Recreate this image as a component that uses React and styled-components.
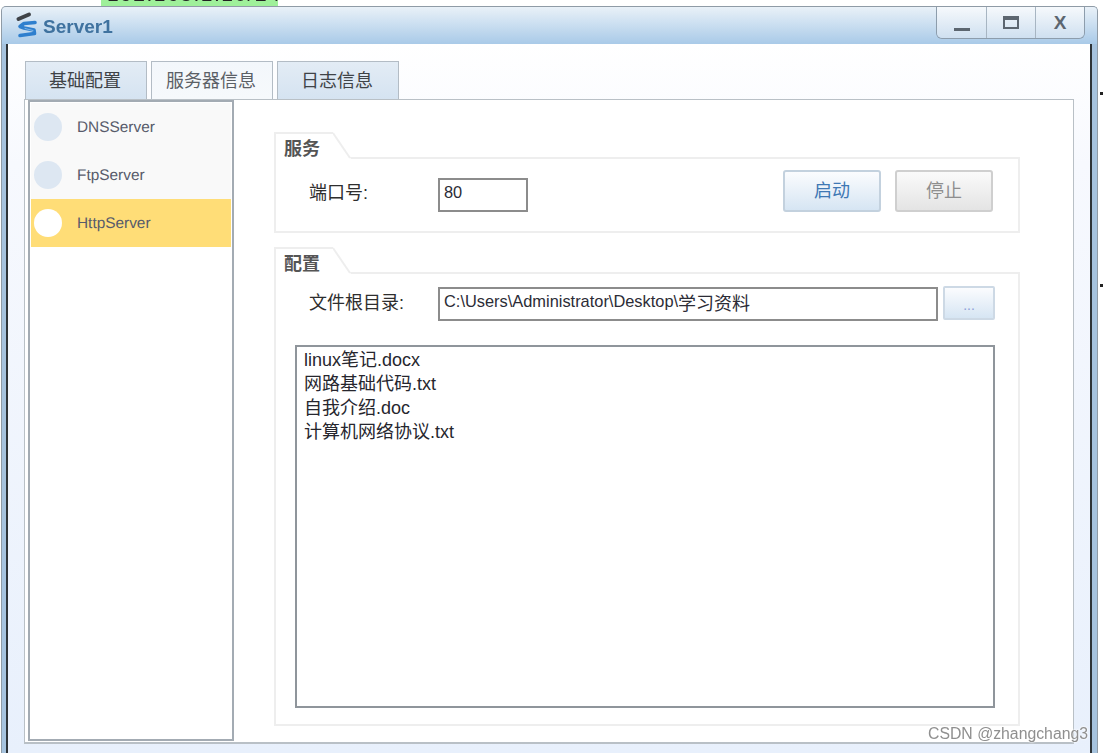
import React from "react";
import styled, { createGlobalStyle } from "styled-components";

const FONT = '"Liberation Sans", "Noto Sans CJK SC", sans-serif';

const GlobalStyle = createGlobalStyle`
  html, body {
    margin: 0;
    padding: 0;
    background: #ffffff;
  }
  * {
    box-sizing: border-box;
  }
`;

const services = [
  { name: "DNSServer" },
  { name: "FtpServer" },
  { name: "HttpServer", active: true },
];

const files = [
  "linux笔记.docx",
  "网路基础代码.txt",
  "自我介绍.doc",
  "计算机网络协议.txt",
];

const ServerIcon = () => (
  <IconSvg width="24" height="28" viewBox="0 0 24 28" fill="none" strokeLinecap="round" strokeLinejoin="round">
    <path d="M4.5 8 L15 3.5" stroke="#3f4348" strokeWidth="4" />
    <path d="M21 11.5 L10 12.5 L6 15.5 L10 17 L20 19 L20.5 22.5 L6 24.5" stroke="#2e7fce" strokeWidth="3.6" />
    <path d="M11 17.5 L19 19.5" stroke="#7db4e6" strokeWidth="1" />
  </IconSvg>
);

const App = () => {
  return (
    <Page>
      <GlobalStyle />
      <TopStrip>
        <IpLabel>192.168.1.10/24</IpLabel>
      </TopStrip>
      <Window>
        <TitleBar>
          <ServerIcon />
          <Title>Server1</Title>
          <Controls>
            <ControlButton>
              <MinIcon />
            </ControlButton>
            <ControlButton>
              <MaxIcon />
            </ControlButton>
            <ControlButton>X</ControlButton>
          </Controls>
        </TitleBar>
        <WindowBody>
          <Tabs>
            <Tab>基础配置</Tab>
            <Tab $selected>服务器信息</Tab>
            <Tab>日志信息</Tab>
          </Tabs>
          <Panel>
            <Sidebar>
              {services.map((item) => (
                <ServiceItem key={item.name} $active={item.active}>
                  <ServiceDot $active={item.active} />
                  <ServiceName>{item.name}</ServiceName>
                </ServiceItem>
              ))}
            </Sidebar>
            <Content>
              <Section>
                <SectionHead>
                  <SectionTab>服务</SectionTab>
                  <TabSlant width="18" height="27" viewBox="0 0 18 27">
                    <path d="M0 0 L0 27 L18 27 Z" fill="#ffffff" />
                    <path d="M0 1 L17 26" stroke="#eeeeee" strokeWidth="2" fill="none" />
                  </TabSlant>
                </SectionHead>
                <ServiceBox>
                  <FieldLabel>端口号:</FieldLabel>
                  <PortInput>80</PortInput>
                  <ButtonGroup>
                    <ActionButton>启动</ActionButton>
                    <ActionButton $disabled>停止</ActionButton>
                  </ButtonGroup>
                </ServiceBox>
              </Section>
              <Section $grow>
                <SectionHead>
                  <SectionTab>配置</SectionTab>
                  <TabSlant width="18" height="27" viewBox="0 0 18 27">
                    <path d="M0 0 L0 27 L18 27 Z" fill="#ffffff" />
                    <path d="M0 1 L17 26" stroke="#eeeeee" strokeWidth="2" fill="none" />
                  </TabSlant>
                </SectionHead>
                <ConfigBox>
                  <PathRow>
                    <PathLabel>文件根目录:</PathLabel>
                    <PathInput>
                      C:\Users\Administrator\Desktop\<CjkText>学习资料</CjkText>
                    </PathInput>
                    <BrowseButton>...</BrowseButton>
                  </PathRow>
                  <FileList>
                    {files.map((file) => (
                      <FileRow key={file}>{file}</FileRow>
                    ))}
                  </FileList>
                </ConfigBox>
              </Section>
            </Content>
          </Panel>
        </WindowBody>
      </Window>
      <EdgeTick $top={92} />
      <EdgeTick $top={284} />
      <Watermark>CSDN @zhangchang3</Watermark>
    </Page>
  );
};

const Page = styled.div`
  position: relative;
  width: 1103px;
  height: 753px;
  overflow: hidden;
  background: #ffffff;
  font-family: ${FONT};
`;

const TopStrip = styled.div`
  height: 6px;
  width: 177px;
  margin-left: 101px;
  background: #9ff09a;
  overflow: hidden;
  filter: blur(0.5px);
`;

const IpLabel = styled.div`
  margin-top: -16px;
  font-size: 21px;
  line-height: 20px;
  letter-spacing: 1.5px;
  padding-left: 6px;
  color: #222222;
  white-space: nowrap;
`;

const Window = styled.div`
  display: flex;
  flex-direction: column;
  width: 1097px;
  height: 747px;
  margin-left: 1px;
  padding: 0 5px 0 4px;
  border: 1px solid #8f9ba6;
  border-bottom: 0;
  border-radius: 5px 5px 0 0;
  background: #a6c3de;
  filter: blur(0.35px);
`;

const TitleBar = styled.div`
  display: flex;
  align-items: center;
  height: 37px;
  flex-shrink: 0;
  margin: 0 -5px 0 -4px;
  padding: 3px 12px 0;
  background: linear-gradient(to bottom, #e9f1f8, #a9cae8);
  border-radius: 4px 4px 0 0;
`;

const IconSvg = styled.svg`
  display: block;
  flex-shrink: 0;
  margin-top: -4px;
`;

const Title = styled.div`
  margin-left: 5px;
  font-size: 19px;
  font-weight: bold;
  color: #3f729f;
`;

const Controls = styled.div`
  display: flex;
  align-self: flex-start;
  margin-top: -3px;
  margin-left: auto;
  height: 32px;
  border: 1px solid #8d9dac;
  border-top: 0;
  border-radius: 0 0 6px 6px;
  overflow: hidden;
`;

const ControlButton = styled.div`
  display: flex;
  align-items: center;
  justify-content: center;
  width: 49px;
  background: linear-gradient(to bottom, #f6f9fc, #cfe0f0);
  font-size: 19px;
  font-weight: bold;
  color: #5c6670;
  & + & {
    border-left: 1px solid #a7b5c2;
  }
`;

const MinIcon = styled.div`
  width: 16px;
  height: 3px;
  margin-top: 14px;
  background: #5c6670;
`;

const MaxIcon = styled.div`
  width: 16px;
  height: 13px;
  border: 2px solid #5c6670;
  border-top-width: 4px;
`;

const WindowBody = styled.div`
  display: flex;
  flex-direction: column;
  flex: 1;
  min-height: 0;
  padding: 17px 16px 9px 16px;
  border-left: 2px solid #2e3438;
  border-right: 2px solid #2e3438;
  background: linear-gradient(to bottom, #ffffff 0, #f7f9fe 120px, #e8f0fc 100%);
`;

const Tabs = styled.div`
  display: flex;
  gap: 4px;
  height: 38px;
  flex-shrink: 0;
  padding-left: 1px;
`;

const Tab = styled.div`
  display: flex;
  align-items: center;
  justify-content: center;
  width: 122px;
  padding: 0 2px 3px 0;
  border: 1px solid #b3bcc5;
  border-bottom: 0;
  font-size: 18px;
  color: ${({ $selected }) => ($selected ? "#5b6066" : "#3f4347")};
  background: ${({ $selected }) =>
    $selected
      ? "linear-gradient(to bottom, #f3f7fb, #f6f9fc)"
      : "linear-gradient(to bottom, #e3ecf5, #d5e3f1)"};
`;

const Panel = styled.div`
  display: flex;
  flex: 1;
  min-height: 0;
  padding: 0 0 1px 3px;
  border: 1px solid #b9c0c6;
  border-width: 1px 1px 2px 1px;
  background: #ffffff;
`;

const Sidebar = styled.div`
  display: flex;
  flex-direction: column;
  width: 206px;
  flex-shrink: 0;
  padding: 1px;
  border: 2px solid #a3abb3;
  background: #ffffff;
`;

const ServiceItem = styled.div`
  display: flex;
  align-items: center;
  gap: 15px;
  height: 48px;
  padding-left: 3px;
  background: ${({ $active }) => ($active ? "#ffdd77" : "#f9f9f9")};
`;

const ServiceDot = styled.div`
  width: 28px;
  height: 28px;
  border-radius: 50%;
  background: ${({ $active }) => ($active ? "#ffffff" : "#dde7f2")};
`;

const ServiceName = styled.span`
  margin-top: 2px;
  font-size: 15.4px;
  text-rendering: geometricPrecision;
  color: #575b6b;
`;

const Content = styled.div`
  display: flex;
  flex-direction: column;
  gap: 14px;
  width: 746px;
  margin-left: 40px;
  padding: 32px 0 15px;
`;

const Section = styled.div`
  display: flex;
  flex-direction: column;
  flex: ${({ $grow }) => ($grow ? 1 : "none")};
  min-height: 0;
`;

const SectionHead = styled.div`
  position: relative;
  z-index: 1;
  display: flex;
  height: 27px;
  margin-bottom: -2px;
`;

const SectionTab = styled.div`
  width: 59px;
  height: 27px;
  padding-left: 8px;
  border: 2px solid #eeeeee;
  border-width: 2px 0 0 2px;
  background: #ffffff;
  font-size: 18px;
  font-weight: bold;
  line-height: 30px;
  color: #555555;
`;

const TabSlant = styled.svg`
  display: block;
  flex-shrink: 0;
`;

const ServiceBox = styled.div`
  display: flex;
  align-items: flex-end;
  height: 76px;
  padding: 11px 25px 19px 33px;
  border: 2px solid #eeeeee;
`;

const FieldLabel = styled.div`
  align-self: center;
  width: 129px;
  flex-shrink: 0;
  font-size: 18px;
  color: #2e2e2e;
`;

const PathLabel = styled(FieldLabel)`
  margin-bottom: 6px;
`;

const InputBase = styled.div`
  display: flex;
  align-items: center;
  height: 34px;
  padding: 0 0 5px 4px;
  border: 2px solid #8c8c8c;
  background: #ffffff;
  font-size: 16.4px;
  color: #2c2c36;
  white-space: nowrap;
`;

const PortInput = styled(InputBase)`
  width: 90px;
`;

const PathInput = styled(InputBase)`
  width: 500px;
  margin-top: 1px;
  white-space: pre;
`;

const CjkText = styled.span`
  font-size: 18px;
`;

const ButtonGroup = styled.div`
  display: flex;
  gap: 14px;
  margin-left: auto;
`;

const ActionButton = styled.div`
  display: flex;
  align-items: center;
  justify-content: center;
  width: 98px;
  height: 42px;
  padding-bottom: 4px;
  border: 2px solid ${({ $disabled }) => ($disabled ? "#cfcfcf" : "#c3d1de")};
  border-radius: 3px;
  font-size: 18px;
  color: ${({ $disabled }) => ($disabled ? "#8e8e8e" : "#3f78b4")};
  background: ${({ $disabled }) =>
    $disabled
      ? "linear-gradient(to bottom, #fafafa, #e4e4e4)"
      : "linear-gradient(to bottom, #fbfcfe, #d6e5f3)"};
`;

const ConfigBox = styled.div`
  display: flex;
  flex-direction: column;
  flex: 1;
  min-height: 0;
  padding: 12px 23px 16px 19px;
  border: 2px solid #eeeeee;
`;

const PathRow = styled.div`
  display: flex;
  align-items: flex-start;
  height: 35px;
  margin-bottom: 24px;
  padding-left: 14px;
`;

const BrowseButton = styled.div`
  display: flex;
  align-items: flex-end;
  justify-content: center;
  width: 52px;
  height: 34px;
  margin-left: 5px;
  padding-bottom: 7px;
  border: 2px solid #cdd9e5;
  border-radius: 2px;
  font-size: 14px;
  line-height: 12px;
  color: #8fa0d8;
  background: linear-gradient(to bottom, #fbfcfe, #d6e5f3);
`;

const FileList = styled.div`
  flex: 1;
  min-height: 0;
  padding: 1px 7px 0;
  border: 2px solid #8f959b;
  background: #ffffff;
`;

const FileRow = styled.div`
  height: 24px;
  font-size: 18px;
  line-height: 24px;
  color: #26262e;
`;

const EdgeTick = styled.div`
  position: absolute;
  top: ${({ $top }) => $top}px;
  left: 1100px;
  width: 3px;
  height: 3px;
  background: #222222;
`;

const Watermark = styled.div`
  position: absolute;
  left: 928px;
  top: 724px;
  font-size: 15.8px;
  line-height: 20px;
  color: #8f8f8f;
  text-shadow: 0 0 2px #ffffff, 0 0 2px #ffffff;
  white-space: nowrap;
`;

export default App;
